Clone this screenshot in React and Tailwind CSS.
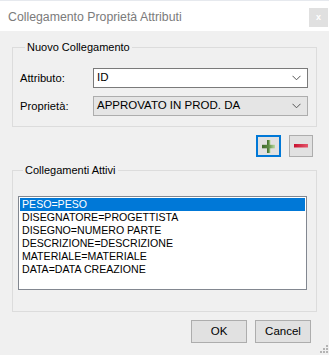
import React from 'react';

const font = { fontFamily: '"Liberation Sans", Arial, sans-serif' };

const Chevron = () => (
  <svg width="9" height="6" viewBox="0 0 9 6" className="shrink-0">
    <path d="M0.5 0.8 L4.5 4.8 L8.5 0.8" fill="none" stroke="#555" strokeWidth="1" />
  </svg>
);

const Combo = ({ value, disabled }) => (
  <div
    className={`flex-1 h-[20px] flex items-center justify-between pl-[3px] pr-[6px] border ${
      disabled ? 'bg-[#e5e5e5] border-[#adadad]' : 'bg-white border-[#7a7a7a]'
    }`}
  >
    <span className="text-[11.5px] text-black leading-none">{value}</span>
    <Chevron />
  </div>
);

const PlusIcon = () => (
  <svg width="13" height="13" viewBox="0 0 13 13">
    <defs>
      <linearGradient id="pg" x1="0" y1="0" x2="1" y2="0">
        <stop offset="0" stopColor="#3f6a2c" />
        <stop offset="0.5" stopColor="#5d8a45" />
        <stop offset="1" stopColor="#b9dca0" />
      </linearGradient>
    </defs>
    <rect x="5" y="0" width="3.5" height="13" fill="url(#pg)" />
    <rect x="0" y="4.8" width="13" height="3.5" fill="url(#pg)" />
  </svg>
);

const MinusIcon = () => (
  <svg width="14" height="4" viewBox="0 0 14 4">
    <defs>
      <linearGradient id="mg" x1="0" y1="0" x2="1" y2="0">
        <stop offset="0" stopColor="#c8102e" />
        <stop offset="1" stopColor="#e4576c" />
      </linearGradient>
    </defs>
    <rect x="0" y="0" width="14" height="3.5" fill="url(#mg)" />
  </svg>
);

const items = [
  'PESO=PESO',
  'DISEGNATORE=PROGETTISTA',
  'DISEGNO=NUMERO PARTE',
  'DESCRIZIONE=DESCRIZIONE',
  'MATERIALE=MATERIALE',
  'DATA=DATA CREAZIONE',
];

export default function App() {
  return (
    <div className="relative w-[329px] h-[355px] bg-[#f0f0f0] overflow-hidden" style={font}>
      {/* title bar */}
      <div className="h-[31px] bg-white border-t border-[#e6e9ee] flex justify-between">
        <div className="pl-[8px] pt-[7px] text-[12.3px] text-[#7b7b7b]">
          Collegamento Proprietà Attributi
        </div>
        <div className="mt-[7px] mr-[1px] w-[19px] h-[19px] bg-[#e0e0e0] flex items-center justify-center text-white text-[9px] font-bold">
          x
        </div>
      </div>

      {/* Nuovo Collegamento */}
      <fieldset className="mx-3 mt-[8px] border border-[#dcdcdc] pl-[7px] pr-[8px] pb-[10px]">
        <legend className="ml-[5px] px-[2px] text-[11px] leading-[16px] text-black">
          Nuovo Collegamento
        </legend>
        <div className="mt-[13px] flex items-center">
          <span className="w-[73px] text-[11.2px] text-black">Attributo:</span>
          <Combo value="ID" />
        </div>
        <div className="mt-[8px] flex items-center">
          <span className="w-[73px] text-[11.2px] text-black">Proprietà:</span>
          <Combo value="APPROVATO IN PROD. DA" disabled />
        </div>
      </fieldset>

      {/* add / remove */}
      <div className="mt-[8px] mr-[16px] flex justify-end gap-[8px]">
        <button className="w-[25px] h-[22px] border-2 border-[#0078d7] bg-[#e1e1e1] flex items-center justify-center">
          <PlusIcon />
        </button>
        <button className="w-[24px] h-[22px] border border-[#adadad] bg-[#e1e1e1] flex items-center justify-center">
          <MinusIcon />
        </button>
      </div>

      {/* Collegamenti Attivi */}
      <fieldset className="mx-3 mt-[5px] border border-[#dcdcdc] pl-[5px] pr-[9px] pb-[21px]">
        <legend className="ml-[5px] px-[2px] text-[11px] leading-[16px] text-black">
          Collegamenti Attivi
        </legend>
        <div className="mt-[18px] h-[94px] bg-white border border-[#828790] p-[1px]">
          {items.map((it, i) => (
            <div
              key={it}
              className={`h-[13px] pl-[2px] text-[10.6px] leading-[13px] ${
                i === 0 ? 'bg-[#0078d7] text-white' : 'text-black'
              }`}
            >
              {it}
            </div>
          ))}
        </div>
      </fieldset>

      {/* OK / Cancel */}
      <div className="mt-[8px] mr-[18px] flex justify-end gap-[8px]">
        <button className="w-[56px] h-[23px] border border-[#adadad] bg-[#e1e1e1] text-[11.5px] text-black">
          OK
        </button>
        <button className="w-[56px] h-[23px] border border-[#adadad] bg-[#e1e1e1] text-[11.5px] text-black">
          Cancel
        </button>
      </div>

      {/* resize grip */}
      <svg className="absolute right-[1px] bottom-[1px]" width="10" height="10" viewBox="0 0 10 10">
        {[
          [8, 0], [8, 3], [5, 3], [8, 6], [5, 6], [2, 6],
        ].map(([x, y]) => (
          <rect key={`${x}-${y}`} x={x} y={y + 1} width="2" height="2" fill="#b4b4b4" />
        ))}
      </svg>
    </div>
  );
}
